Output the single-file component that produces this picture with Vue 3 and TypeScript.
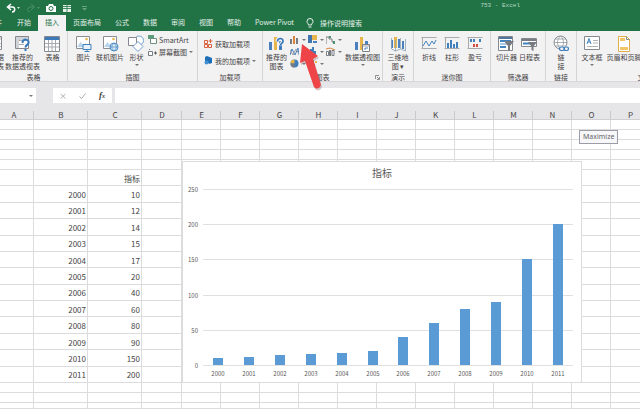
<script setup lang="ts">
interface Tool {
  icon: string
  lines: string[]
  caret?: boolean
}
interface Group {
  key: string
  label: string
  tools: Tool[]
}

const tabs: string[] = ['开始', '插入', '页面布局', '公式', '数据', '审阅', '视图', '帮助', 'Power Pivot']
const activeTab = '插入'

const frame = '<path d="M1.5 1.5h13v12h-13z" fill="#fff" stroke="#8a8d91"/><circle cx="11.5" cy="4" r="1.3" fill="#e9b54d"/><path d="M2 12l3.5-5 3 3.5 2-2 3.500 4z" fill="#b8d3ea"/>'
const bars = '<path d="M1 7h3v8H1zM11 6h3v9h-3z" fill="#4a80bd"/><path d="M6 2h3v13H6z" fill="#e6b64d"/>'

const icons: Record<string, string> = {
  pivot: '<path d="M.5 1.500h14v13h-14z" fill="#fff" stroke="#85888c"/><path d="M1 2h13v3H1z" fill="#d3d6da"/><path d="M5 2v12M1 8.500h13M1 11.500h13" stroke="#b7babd"/>',
  pivotHelp: '<path d="M1.500 1.500h13v12h-13z" fill="#fff" stroke="#85888c"/><path d="M2 2h12v3H2zM2 5h3v8H2z" fill="#d0d4d9"/><path d="M5 5.500h9M5 9.500h5" stroke="#a9adb2"/><path d="M8.500 8c0-5 7-4 6 0-.5 2-3 2-3 4.500" fill="none" stroke="#3679bb" stroke-width="2"/><path d="M10.500 14h2v2h-2z" fill="#3679bb"/>',
  table: '<path d="M.5 1.500h15v15H.5z" fill="#fff" stroke="#85888c"/><path d="M1 2h14v3H1z" fill="#3d79b8"/><path d="M4.500 5v11M8 5v11M11.500 5v11M1 8.500h14M1 12h14" stroke="#a5a9ae"/>',
  picture: frame + '<path d="M8 9.500h8v5H8z" fill="#e8f2fa" stroke="#3f80bd"/><path d="M12 14v2M9.500 16.500h5" stroke="#3f80bd"/>',
  online: frame + '<circle cx="12" cy="12" r="4" fill="#d8e9f6" stroke="#4a8bc4"/><path d="M8 12h8M12 8c-3 3-3 5 0 8M12 8c3 3 3 5 0 8" fill="none" stroke="#4a8bc4" stroke-width=".7"/>',
  shapes: '<circle cx="11" cy="5.500" r="4.500" fill="#fff" stroke="#6fa0d0"/><path d="M.5 2.500h8v8h-8z" fill="#fff" stroke="#85898e"/><path d="M10 6.500l5 5-5 5-5-5z" fill="#fff" stroke="#6fa0d0"/>',
  chartHelp: bars + '<path d="M9.500 6.500c0-4 6-4 5.500 0-.5 2-2.500 2-2.500 4" fill="none" stroke="#f3f2f3" stroke-width="4"/><path d="M9.500 6.500c0-4 6-4 5.500 0-.5 2-2.500 2-2.500 4" fill="none" stroke="#3679bb" stroke-width="1.700"/><path d="M11.500 12h2v2h-2z" fill="#3679bb"/>',
  pivotChart: bars + '<path d="M8.500 9.500h7v7h-7z" fill="#fff" stroke="#7b8086"/><path d="M9 10h6v2H9z" fill="#ccd2d8"/><path d="M11 15V13h3" stroke="#4a80bd" fill="none"/>',
  map: '<path d="M1 5h2v8H1zM8 4h2v9H8zM12 6h2v8h-2z" fill="#4a80bd"/><path d="M4 2h3v11H4z" fill="#e6b64d"/><path d="M1.500 3v11l4 2 5-2 5 2V4M5.500 5v11M10.500 3v11" fill="none" stroke="#8aa2b5" stroke-width=".8"/>',
  line: '<path d="M.5 2.500h15M.5 13.500h15M1.500 2v12" stroke="#a6a9ad" fill="none"/><path d="M2 11l3-5 3 5 3-5 2 3 2-4" fill="none" stroke="#4584be"/>',
  column: '<path d="M.5 2.500h15M.5 13.500h15M1.500 2v12" stroke="#a6a9ad" fill="none"/><path d="M3 8h2v5H3zM6 5h2v8H6zM9 9h2v4H9zM12 7h2v6h-2z" fill="#4080bd"/>',
  winloss: '<path d="M.5 2.500h15M.5 13.500h15M1.500 2v12" stroke="#a6a9ad" fill="none"/><path d="M3 4h2v3H3zM6 4h2v3H6zM12 4h2v3h-2z" fill="#4080bd"/><path d="M6 9h2v3H6zM9 9h2v3H9z" fill="#d34c40"/>',
  slicer: '<path d="M.5 1.500h14v14H.5z" fill="#fff" stroke="#85898e"/><path d="M1 2h13v2H1z" fill="#50779b"/><path d="M2 5h11v2H2zM2 11h6v2H2z" fill="#4184c2"/><path d="M2 8h11v2H2z" fill="#a9c9e5"/><path d="M6 6h10l-4 5v5l-2-1v-4z" fill="#777b80"/>',
  timeline: '<path d="M.5 3.500h15v8H.5z" fill="#fff" stroke="#85898e"/><path d="M1 4h14v2H1z" fill="#777c82"/><path d="M2 8.500h9" stroke="#4184c2" stroke-width="2"/><path d="M7 7h9l-3.500 4.500V16l-2-1v-3.500z" fill="#777b80"/>',
  link: '<circle cx="7.500" cy="7.500" r="6.500" fill="#fff" stroke="#8a8e92"/><path d="M1 7.500h13M2 4h11M2 11h11M7.500 1c-4 4-4 9 0 13M7.500 1c4 4 4 9 0 13" fill="none" stroke="#8a8e92" stroke-width=".7"/><path d="M7 11.500h9v5H7z" fill="#f3f2f3"/><rect x="6.500" y="12" width="5" height="3.500" rx="1.700" fill="none" stroke="#3679bb" stroke-width="1.200"/><rect x="11" y="12" width="4.500" height="3.500" rx="1.700" fill="none" stroke="#3679bb" stroke-width="1.200"/>',
  textbox: '<path d="M.5 1.500h15v13H.5z" fill="#fff" stroke="#85898e"/><path d="M3 9l2-5.500L7 9M3.700 7h2.600" fill="none" stroke="#3f80bd"/><path d="M9 5.500h5M9 8h5M3 11.500h11" stroke="#b0b3b6"/>',
  header: '<path d="M2.500 1.500h8l3 3v12h-11z" fill="#fff" stroke="#e0ae4c"/><path d="M4 3h5v3H4zM4 12h8v3H4z" fill="#f0c565"/><path d="M10.500 1.500v3h3" fill="none" stroke="#85898e"/>'
}

const groups: Group[] = [
  {
    key: 'tables',
    label: '表格',
    tools: [
      { icon: 'pivot', lines: ['数据', '透视表'] },
      { icon: 'pivotHelp', lines: ['推荐的', '数据透视表'] },
      { icon: 'table', lines: ['表格'] }
    ]
  },
  {
    key: 'art',
    label: '插图',
    tools: [
      { icon: 'picture', lines: ['图片'] },
      { icon: 'online', lines: ['联机图片'] },
      { icon: 'shapes', lines: ['形状'], caret: true }
    ]
  },
  { key: 'addins', label: '加载项', tools: [] },
  { key: 'charts', label: '图表', tools: [{ icon: 'chartHelp', lines: ['推荐的', '图表'] }] },
  { key: 'tour', label: '演示', tools: [{ icon: 'map', lines: ['三维地', '图 ▾'] }] },
  {
    key: 'spark',
    label: '迷你图',
    tools: [
      { icon: 'line', lines: ['折线'] },
      { icon: 'column', lines: ['柱形'] },
      { icon: 'winloss', lines: ['盈亏'] }
    ]
  },
  {
    key: 'filters',
    label: '筛选器',
    tools: [
      { icon: 'slicer', lines: ['切片器'] },
      { icon: 'timeline', lines: ['日程表'] }
    ]
  },
  { key: 'links', label: '链接', tools: [{ icon: 'link', lines: ['链', '接'] }] },
  {
    key: 'text',
    label: '文本',
    tools: [
      { icon: 'textbox', lines: ['文本框'], caret: true },
      { icon: 'header', lines: ['页眉和页脚'] }
    ]
  }
]

const pivotChart: Tool = { icon: 'pivotChart', lines: ['数据透视图'], caret: true }

const chartKinds: { name: string; art: string }[] = [
  { name: '柱形图', art: '<path d="M0 4h2v5H0zM6 3h2v6H6z" fill="#777c82"/><path d="M3 1h2v8H3z" fill="#d8833b"/>' },
  { name: '层次结构图', art: '<path d="M0 0h4v8H0z" fill="#4076b0"/><path d="M4 0h5v5H4z" fill="#e6b64d"/><path d="M5 6h4v2H5z" fill="#4a80bd"/>' },
  { name: '瀑布图', art: '<path d="M0 9V2h3v2h3v3h3" fill="none" stroke="#777c82"/><path d="M3 1h2v2H3zM7 6h2v3H7z" fill="#4c9272"/>' },
  { name: '折线图', art: '<path d="M0 8l2-6 3 6 3-7 1 7" fill="none" stroke="#4a80bd"/><path d="M0 3l3 5 3-6 3 5" fill="none" stroke="#9aa0a6"/>' },
  { name: '统计图', art: '<path d="M0 6h2v3H0zM2 2h2v7H2zM4 0h2v9H4zM6 4h2v5H6z" fill="#3f7dbb"/>' },
  { name: '组合图', art: '<path d="M.5 4.500h2v4h-2zM6 3.500h2v5H6z" fill="#fff" stroke="#777c82"/><path d="M0 2l4-1 5 2" fill="none" stroke="#d8833b"/><path d="M3 3h2v6H3z" fill="#777c82"/>' },
  { name: '饼图', art: '<circle cx="4.500" cy="4.500" r="4" fill="#3f7dbb"/><path d="M4.500 4.500V.5a4 4 0 0 0-4 4z" fill="#e6b64d"/><path d="M4.500 4.500v4a4 4 0 0 1-4-4z" fill="#777c82"/>' },
  { name: '散点图', art: '<path d="M0 1h2v2H0zM5 5h2v2H5z" fill="#4a80bd"/><path d="M4 1h2v2H4zM1 6h2v2H1z" fill="#4c9272"/><path d="M7 2h2v2H7z" fill="#e6b64d"/>' }
]

const columns: string[] = 'ABCDEFGHIJKLMNOP'.split('')

const data: { year: number; value: number }[] = [
  { year: 2000, value: 10 },
  { year: 2001, value: 12 },
  { year: 2002, value: 14 },
  { year: 2003, value: 15 },
  { year: 2004, value: 17 },
  { year: 2005, value: 20 },
  { year: 2006, value: 40 },
  { year: 2007, value: 60 },
  { year: 2008, value: 80 },
  { year: 2009, value: 90 },
  { year: 2010, value: 150 },
  { year: 2011, value: 200 }
]

/* Sheet rows: five blank, the heading row, one per record, three blank */
const rows: string[][] = Array.from({ length: 21 }, (_, r) =>
  columns.map((c) => {
    if (r === 5 && c === 'C') return '指标'
    const record = data[r - 6]
    if (!record) return ''
    if (c === 'B') return String(record.year)
    if (c === 'C') return String(record.value)
    return ''
  })
)

/* Plot area in chart units */
const plot = { left: 21, right: 391, top: 28, base: 204, max: 250 }
const ticks = [0, 50, 100, 150, 200, 250]
const yOf = (v: number): number => Math.round(plot.base - (v / plot.max) * (plot.base - plot.top))
const step = (plot.right - plot.left) / data.length
const xOf = (i: number): number => Math.round(plot.left + step * (i + 0.5))
</script>

<template>
  <div class="window">
    <header class="titlebar">
      <div class="quick">
        <button aria-label="撤消"><svg width="14" height="10"><path d="M5 1L1.500 4 5 7M2 4h4.500c3 0 3 5-.5 5" fill="none" stroke="#fff" stroke-width="1.500" /><path d="M11 4h3l-1.500 2z" fill="#cfe3d6" /></svg></button>
        <button aria-label="恢复"><svg width="14" height="10"><path d="M5 1l3.500 3L5 7M8 4H4C1 4 1 9 4 9" fill="none" stroke="#4d9069" /><path d="M11 4h3l-1.500 2z" fill="#4d9069" /></svg></button>
        <button aria-label="照相机"><svg width="10" height="10"><path d="M0 3h2l1-2h4l1 2h2v6H0z" fill="#fff" /><circle cx="5" cy="5.500" r="2" fill="#fff" stroke="#217346" /></svg></button>
        <button aria-label="拆分"><svg width="10" height="10"><path d="M1 2h8v7H1z" fill="#e6f1ea" /><path d="M5 1v8M0 5.500h10M1 3.500h8" stroke="#217346" stroke-width=".8" /></svg></button>
        <button aria-label="自定义"><svg width="6" height="10"><path d="M0 3.500h5" stroke="#69a381" /><path d="M0 5h5L2.500 7.500z" fill="#69a381" /></svg></button>
      </div>
      <div class="doc">753 - Excel</div>
    </header>

    <nav class="tabs">
      <a class="tab cut" href="#">文件</a>
      <a v-for="t in tabs" :key="t" class="tab" :class="{ active: t === activeTab }" href="#">{{ t }}</a>
      <button class="tell">
        <svg width="8" height="10" viewBox="0 0 8 10"><path d="M2.500 7C2.500 5.500 1 5 1 3.500a3 3 0 0 1 6 0C7 5 5.500 5.500 5.500 7zM2.500 9h3" fill="none" stroke="#fff" stroke-width=".9" /></svg>
        <span>操作说明搜索</span>
      </button>
    </nav>

    <div class="ribbon">
      <section v-for="g in groups" :key="g.key" class="group" :class="g.key">
        <div class="tools">
          <button v-for="t in g.tools" :key="t.icon" class="tool" :class="t.icon">
            <svg width="17" height="17" viewBox="0 0 17 17" v-html="icons[t.icon]" />
            <span v-for="l in t.lines" :key="l">{{ l }}</span>
            <i v-if="t.caret" class="caret" />
          </button>

          <div v-if="g.key === 'art'" class="stack">
            <button class="row">
              <svg width="9" height="9"><path d="M0 0h6v4H0z" fill="#5e9c7e" /><path d="M2.500 3.500h6v5h-6z" fill="#fff" stroke="#6d8f80" /></svg>
              <span>SmartArt</span>
            </button>
            <button class="row">
              <svg width="9" height="9"><path d="M.5 4.500h4v4h-4zM1 3l1-1" fill="#fff" stroke="#777c82" /><path d="M6 6h3M7.500 4.500v3" stroke="#555" /></svg>
              <span>屏幕截图</span><i class="caret" />
            </button>
          </div>

          <div v-if="g.key === 'addins'" class="stack wide">
            <button class="row">
              <svg width="9" height="9"><path d="M.5 1.500h3v3h-3zM.5 5.500h3v3h-3zM4.500 5.500h3v3h-3zM6.500 0v4M4.500 2h4" fill="none" stroke="#d9603b" /></svg>
              <span>获取加载项</span>
            </button>
            <button class="row">
              <svg width="9" height="9"><path d="M3 0l5 2v5L5 8 3 5H1V1z" fill="#1f6fb8" /><circle cx="2.500" cy="6.500" r="2" fill="#3f90d4" /></svg>
              <span>我的加载项</span><i class="caret" />
            </button>
          </div>

          <template v-if="g.key === 'charts'">
            <div class="kinds">
              <button v-for="k in chartKinds" :key="k.name" class="kind" :aria-label="k.name">
                <svg width="9" height="9" v-html="k.art" /><i class="caret" />
              </button>
            </div>
            <button class="tool pivotChart">
              <svg width="17" height="17" viewBox="0 0 17 17" v-html="icons[pivotChart.icon]" />
              <span>{{ pivotChart.lines[0] }}</span>
              <i class="caret" />
            </button>
          </template>
        </div>
        <div class="label">{{ g.label }}</div>
        <button v-if="g.key === 'charts'" class="launcher" aria-label="查看所有图表">
          <svg width="5" height="5"><path d="M.5 4V.5H4M2 2l2 2M4.500 2v2.500H2" fill="none" stroke="#777" stroke-width=".8" /></svg>
        </button>
      </section>
    </div>

    <div class="formula">
      <button class="namebox" aria-label="名称框"><i class="caret" /></button>
      <div class="entry">
        <button aria-label="取消"><svg width="6" height="6"><path d="M.5 1l5 4.500M5.500 1l-5 4.500" stroke="#b4b4b6" /></svg></button>
        <button aria-label="输入"><svg width="7" height="6"><path d="M.5 3.500l2 2 4-5" fill="none" stroke="#a9a9ab" /></svg></button>
        <button class="fx" aria-label="插入函数">f<small>x</small></button>
      </div>
      <input class="bar" type="text" aria-label="编辑栏" />
    </div>

    <main class="sheet">
      <table class="cells">
        <thead>
          <tr>
            <th v-for="c in columns" :key="c" scope="col" :class="{ first: c === 'A' }">{{ c }}</th>
          </tr>
        </thead>
        <tbody>
          <tr v-for="(row, r) in rows" :key="r">
            <td v-for="(cell, c) in row" :key="c">{{ cell }}</td>
          </tr>
        </tbody>
      </table>

      <svg class="chart" viewBox="0 0 400 222" role="img" aria-label="指标">
        <rect x=".5" y=".5" width="399" height="221" fill="#fff" stroke="#dcdcdc" />
        <text class="heading" x="200" y="16">指标</text>
        <g v-for="t in ticks" :key="t">
          <line :x1="plot.left" :x2="plot.right" :y1="yOf(t) + 0.5" :y2="yOf(t) + 0.5" stroke="#e0e0e0" />
          <text class="tick" x="16" :y="yOf(t) + 3">{{ t }}</text>
        </g>
        <g v-for="(d, i) in data" :key="d.year">
          <rect :x="xOf(i) - 5" :y="yOf(d.value)" width="10" :height="plot.base - yOf(d.value)" fill="#5b9bd5" />
          <text class="year" :x="xOf(i)" y="215">{{ d.year }}</text>
        </g>
      </svg>

      <div class="tip" role="tooltip">Maximize</div>
    </main>

    <svg class="pointer" width="26" height="50" viewBox="0 0 26 50" aria-hidden="true">
      <path d="M3 1L1 20 6 18 15 44Q19 48 22 42L14 16 19 13z" fill="#8a6a6a" opacity=".35" transform="translate(1 1)" />
      <path d="M3 0L1 19 6 17 15 43Q19 47 22 41L14 15 19 12z" fill="#ee4447" />
    </svg>
  </div>
</template>

<style>
body {
  margin: 0;
  overflow: hidden;
}
</style>

<style scoped>
.window {
  position: relative;
  display: flex;
  flex-direction: column;
  height: 100vh;
  overflow: hidden;
  background: #fff;
  color: #444;
  font-family: 'Noto Sans CJK SC', 'Noto Sans', sans-serif;
  font-size: 7px;
  line-height: 8px;
}
button {
  margin: 0;
  padding: 0;
  border: 0;
  background: none;
  color: inherit;
  font: inherit;
}
svg {
  display: block;
  flex: none;
}
.caret {
  flex: none;
  width: 0;
  height: 0;
  border: 2px solid transparent;
  border-top-color: #777;
  border-bottom: 0;
}

.titlebar {
  display: flex;
  justify-content: space-between;
  height: 15px;
  flex: none;
  background: #217346;
}
.quick {
  display: flex;
  gap: 6px;
  padding: 1px 0 0 6px;
}
.quick button:nth-child(4) {
  margin-right: 4px;
}
.doc {
  padding: 2px 120px 0 0;
  color: #bcd8c6;
  font-family: 'Liberation Mono', monospace;
  font-size: 6px;
}

.tabs {
  display: flex;
  height: 16px;
  flex: none;
  background: #217346;
  color: #e4f0e8;
}
.tab {
  padding: 0 7px;
  color: inherit;
  line-height: 15px;
  text-decoration: none;
  white-space: nowrap;
}
.tab.cut {
  display: flex;
  justify-content: flex-end;
  width: 2px;
  padding: 0 8px 0 0;
  overflow: hidden;
}
.tab.active {
  background: #f3f2f3;
  color: #217346;
}
.tell {
  display: flex;
  align-items: center;
  gap: 6px;
  padding: 0 0 0 5px;
  white-space: nowrap;
}

.ribbon {
  display: flex;
  height: 51px;
  flex: none;
  overflow: hidden;
  background: #f3f2f3;
  border-bottom: 1px solid #d8d6d8;
  box-sizing: border-box;
}
.group {
  position: relative;
  display: flex;
  flex-direction: column;
  flex: none;
  box-sizing: border-box;
  padding: 4px 0 0;
  border-right: 1px solid #d5d4d6;
}
.tables { width: 68px; }
.art { width: 130px; }
.addins { width: 65px; }
.charts { width: 120px; }
.tour { width: 31px; }
.spark { width: 77px; }
.filters { width: 55px; }
.links { width: 31px; }
.text { width: 136px; }
.tools {
  display: flex;
  align-items: flex-start;
  height: 38px;
}
.spark .tools,
.filters .tools,
.links .tools,
.tour .tools {
  justify-content: center;
}
.art .tools {
  padding-left: 4px;
}
.text .tools {
  padding-left: 1px;
}
.label {
  text-align: center;
}
.tool {
  display: flex;
  flex-direction: column;
  align-items: center;
  flex: none;
  width: 23px;
  line-height: 9px;
  white-space: nowrap;
}
.tool svg {
  margin-bottom: 1px;
}
.tool .caret {
  margin-top: 2px;
}
.tool.pivot {
  width: 4px;
  align-items: flex-end;
}
.tool.pivotHelp,
.tool.pivotChart {
  width: 37px;
}
.tool.online {
  width: 30px;
}
.tool.chartHelp {
  width: 27px;
}
.tool.textbox {
  width: 28px;
}
.tool.header {
  width: 36px;
}
.stack {
  display: flex;
  flex-direction: column;
  gap: 3px;
}
.stack.wide {
  gap: 8px;
  padding: 4px 0 0 6px;
}
.row {
  display: flex;
  align-items: center;
  gap: 2px;
  height: 9px;
  white-space: nowrap;
}
.kinds {
  display: grid;
  grid-template-columns: repeat(3, 18px);
  grid-auto-rows: 12px;
  align-items: start;
}
.kind {
  display: flex;
  align-items: center;
  gap: 3px;
}
.launcher {
  position: absolute;
  right: 2px;
  bottom: 1px;
}

.formula {
  display: flex;
  height: 21px;
  flex: none;
  box-sizing: border-box;
  padding: 6px 0 0;
  background: #e6e5e7;
}
.namebox {
  display: flex;
  align-items: center;
  justify-content: flex-end;
  width: 36px;
  padding-right: 3px;
  background: #fff;
}
.entry {
  display: flex;
  align-items: center;
  justify-content: space-between;
  width: 59px;
  box-sizing: border-box;
  margin: 0 3px 0 17px;
  padding: 0 7px;
  background: #fff;
}
.fx {
  font-family: 'Liberation Serif', serif;
  font-size: 9px;
  font-style: italic;
  font-weight: bold;
}
.fx small {
  font-size: 6px;
}
.bar {
  flex: 1;
  min-width: 0;
  padding: 0 4px;
  border: 0;
  background: #fff;
  font: inherit;
}

.sheet {
  position: relative;
  flex: 1;
  min-height: 0;
  overflow: hidden;
}
.cells {
  display: grid;
  grid-template-columns: 34px 54px 54px 40px repeat(12, 39px);
  grid-template-rows: 17px repeat(5, 10px) repeat(13, minmax(0, 1fr)) 10px 10px 6px;
  height: 100%;
  font-size: 8px;
}
.cells thead,
.cells tbody,
.cells tr {
  display: contents;
}
.cells th {
  padding: 8px 0 0;
  border-bottom: 1px solid #cfcfd1;
  background: linear-gradient(#c9c8ca, #c9c8ca) right bottom / 1px 8px no-repeat #e6e5e7;
  font-weight: normal;
}
.cells th.first {
  padding-right: 6px;
}
.cells td {
  display: flex;
  align-items: center;
  justify-content: flex-end;
  padding: 2px 1px 0 0;
  overflow: hidden;
  border-right: 1px solid #dcdcde;
  border-bottom: 1px solid #dcdcde;
}
.chart {
  position: absolute;
  top: 58px;
  left: 182px;
  width: 400px;
  height: 222px;
}
.chart text {
  fill: #595959;
  font-size: 6px;
}
.chart .heading {
  font-size: 10px;
  text-anchor: middle;
}
.chart .tick {
  text-anchor: end;
}
.chart .year {
  text-anchor: middle;
}
.tip {
  position: absolute;
  top: 27px;
  left: 579px;
  padding: 2px 3px;
  border: 1px solid #9b9ca6;
  background: #f7f7fa;
  color: #666;
  font-family: 'Noto Sans', sans-serif;
}
.pointer {
  position: absolute;
  top: 44px;
  left: 299px;
}
</style>
